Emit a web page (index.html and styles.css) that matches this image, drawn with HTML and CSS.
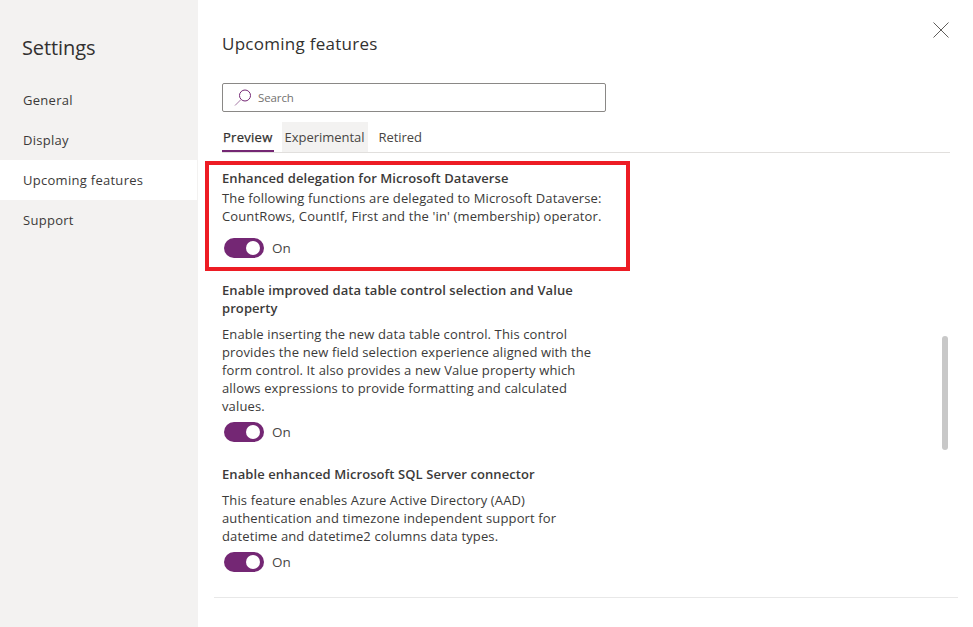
FILE: index.html
```html
<!DOCTYPE html>
<html lang="en">
<head>
<meta charset="utf-8">
<title>Settings</title>
<link rel="stylesheet" href="styles.css">
</head>
<body>
<div class="app">
  <nav class="sidebar">
    <h1 class="sidebar-title">Settings</h1>
    <ul class="nav">
      <li class="nav-item">General</li>
      <li class="nav-item">Display</li>
      <li class="nav-item active">Upcoming features</li>
      <li class="nav-item">Support</li>
    </ul>
  </nav>
  <main class="main">
    <svg class="close" viewBox="0 0 16 16" width="16" height="16"><path d="M0.5 0.5 L15.5 15.5 M15.5 0.5 L0.5 15.5" stroke="#605e5c" stroke-width="1" fill="none"/></svg>
    <h2 class="page-title">Upcoming features</h2>
    <div class="search">
      <svg class="search-icon" viewBox="0 0 18 18" width="18" height="18"><circle cx="11" cy="6.5" r="5.5" stroke="#742774" stroke-width="1" fill="none"/><path d="M7 10.5 L1 16.5" stroke="#a67aa6" stroke-width="1" fill="none"/></svg>
      <span class="search-text">Search</span>
    </div>
    <div class="tabs">
      <span class="tab selected">Preview</span>
      <span class="tab hover">Experimental</span>
      <span class="tab">Retired</span>
    </div>
    <div class="features">
      <section class="feature highlight">
        <h3 class="feature-title">Enhanced delegation for Microsoft Dataverse</h3>
        <p class="feature-desc">The following functions are delegated to Microsoft Dataverse: CountRows, CountIf, First and the 'in' (membership) operator.</p>
        <div class="toggle-row"><span class="toggle"><span class="knob"></span></span><span class="toggle-label">On</span></div>
      </section>
      <section class="feature second">
        <h3 class="feature-title">Enable improved data table control selection and Value property</h3>
        <p class="feature-desc">Enable inserting the new data table control. This control provides the new field selection experience aligned with the form control. It also provides a new Value property which allows expressions to provide formatting and calculated values.</p>
        <div class="toggle-row"><span class="toggle"><span class="knob"></span></span><span class="toggle-label">On</span></div>
      </section>
      <section class="feature third">
        <h3 class="feature-title">Enable enhanced Microsoft SQL Server connector</h3>
        <p class="feature-desc">This feature enables Azure Active Directory (AAD) authentication and timezone independent support for datetime and datetime2 columns data types.</p>
        <div class="toggle-row"><span class="toggle"><span class="knob"></span></span><span class="toggle-label">On</span></div>
      </section>
    </div>
    <div class="scrollbar"></div>
    <div class="footer-line"></div>
  </main>
</div>
</body>
</html>
```

FILE: styles.css
```css
* { box-sizing: border-box; }
html, body { margin: 0; height: 100%; background: #fff; }
body { font-family: "Open Sans", "Noto Sans", "Liberation Sans", sans-serif; color: #323130; overflow: hidden; }
.app { display: flex; width: 973px; height: 627px; }
.sidebar { width: 198px; flex: none; background: #f3f2f1; padding-top: 36px; }
.sidebar-title { margin: 0 0 20px 22px; font-size: 20px; line-height: 24px; font-weight: 400; letter-spacing: -0.1px; }
.nav { list-style: none; margin: 0; padding: 0; }
.nav-item { height: 40px; line-height: 40px; padding-left: 23px; font-size: 13px; letter-spacing: 0.28px; color: #3b3a39; }
.nav-item.active { background: #fff; margin-right: 1px; }
.main { position: relative; flex: 1; padding: 32px 0 0 24px; }
.close { position: absolute; top: 22px; left: 735px; }
.page-title { margin: 0 0 27px; font-size: 17px; line-height: 24px; font-weight: 400; letter-spacing: 0.27px; }
.search { width: 384px; height: 29px; border: 1px solid #8a8886; border-radius: 2px; display: flex; align-items: center; padding-left: 11px; gap: 6px; }
.search-icon { flex: none; }
.search-text { font-size: 11.5px; color: #747270; letter-spacing: -0.1px; }
.tabs { display: flex; width: 728px; height: 31px; margin-top: 10px; border-bottom: 1px solid #e1dfdd; }
.tab { height: 30px; line-height: 30px; font-size: 13px; letter-spacing: -0.03px; color: #484644; }
.tab.selected { padding: 0 2px 0 1px; margin-right: 8px; border-bottom: 2px solid #742774; letter-spacing: 0.27px; color: #323130; -webkit-text-stroke: 0.25px #323130; }
.tab.hover { padding: 0 4px 0 2px; background: #f3f2f1; margin-right: 10px; }
.features { width: 380px; }
.feature-title { margin: 0 0 8px; font-size: 13px; line-height: 18px; font-weight: 600; letter-spacing: 0.08px; color: #3b3a39; }
.feature-desc { margin: 0 0 2px; font-size: 13px; line-height: 18px; letter-spacing: 0.13px; color: #3b3a39; }
.toggle-row { display: flex; align-items: center; height: 30px; padding-left: 2px; gap: 8px; }
.toggle { width: 40px; height: 20px; border-radius: 10px; background: #742774; position: relative; flex: none; }
.knob { position: absolute; top: 3px; right: 4px; width: 14px; height: 14px; border-radius: 50%; background: #fff; }
.toggle-label { font-size: 13.5px; color: #484644; }
.highlight { width: 425px; height: 110px; margin: 8px 0 0 -17px; padding: 4px 0 0 13px; border: 4px solid #ed1c24; }
.highlight .feature-title { margin-bottom: 2px; }
.highlight .feature-desc { width: 382px; }
.highlight .toggle-row { margin-top: 8px; }
.second { margin-top: 10px; }
.third { margin-top: 18px; }
.scrollbar { position: absolute; left: 744px; top: 336px; width: 6px; height: 114px; border-radius: 3px; background: #c8c8c8; }
.footer-line { position: absolute; left: 16px; top: 597px; width: 744px; height: 1px; background: #e8e8e8; }
```
